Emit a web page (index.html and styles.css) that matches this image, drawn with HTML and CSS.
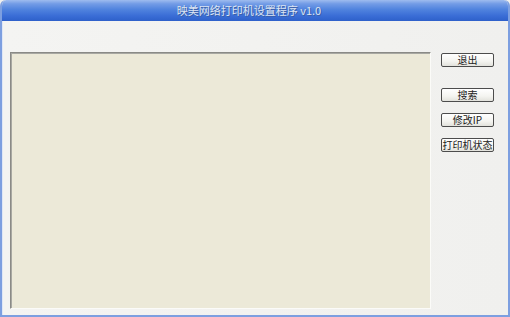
FILE: index.html
```html
<!DOCTYPE html>
<html>
<head>
<meta charset="utf-8">
<link rel="stylesheet" href="styles.css">
</head>
<body>
<div class="window">
  <div class="titlebar"><span class="title">映美网络打印机设置程序 v1.0</span></div>
  <div class="client">
    <div class="panel"></div>
    <div class="actions">
      <button class="btn btn-exit">退出</button>
      <button class="btn btn-search">搜索</button>
      <button class="btn">修改IP</button>
      <button class="btn">打印机状态</button>
    </div>
  </div>
</div>
</body>
</html>
```

FILE: styles.css
```css
html, body {
  margin: 0;
  padding: 0;
  width: 510px;
  height: 317px;
  overflow: hidden;
  background: #f0f0ee;
}
.window {
  width: 510px;
  height: 317px;
  box-sizing: border-box;
  display: flex;
  flex-direction: column;
  border-left: 2px solid #7d9fe0;
  border-right: 2px solid #7d9fe0;
  border-bottom: 2px solid #7d9fe0;
  border-radius: 6px 6px 0 0;
  background: #f0f0ee;
  overflow: hidden;
}
.titlebar {
  height: 21px;
  margin: 0 -2px;
  flex: none;
  display: flex;
  align-items: center;
  justify-content: center;
  background: linear-gradient(#9ebcef 0%, #739ce6 18%, #5083de 45%, #3a6dd6 75%, #2e60ca 100%);
  border-radius: 6px 6px 0 0;
}
.title {
  font-family: "Noto Sans CJK SC", "DejaVu Sans", sans-serif;
  font-size: 11px;
  color: #dce4f2;
  text-shadow: 1px 1px 0 #3a5ea8;
  line-height: 1;
  margin-right: 12px;
}
.client {
  flex: 1;
  display: flex;
  padding: 31px 0 6px 7px;
  gap: 10px;
  background: linear-gradient(90deg, #f4f4f2, #f0f0ee);
  border-left: 1px solid #dfe7f6;
}
.panel {
  width: 421px;
  box-sizing: border-box;
  background: #ece9d8;
  border-top: 1px solid #8a8a86;
  border-left: 1px solid #8a8a86;
  border-right: 1px solid #fbfbf8;
  border-bottom: 1px solid #fbfbf8;
  box-shadow: inset 1px 1px 0 #a8a8a2;
}
.actions {
  display: flex;
  flex-direction: column;
  align-items: flex-start;
  padding-top: 1px;
}
.btn {
  width: 53px;
  height: 14px;
  margin: 0 0 11px 0;
  padding: 0;
  box-sizing: border-box;
  border: 1px solid #4c4c4c;
  border-radius: 2px;
  background: linear-gradient(#ffffff, #f4f4f0 60%, #e2e2dc);
  font-family: "Noto Sans CJK SC", sans-serif;
  font-size: 10px;
  line-height: 12px;
  color: #222;
  white-space: nowrap;
  overflow: hidden;
}
.btn-exit {
  margin-bottom: 21px;
}
```
